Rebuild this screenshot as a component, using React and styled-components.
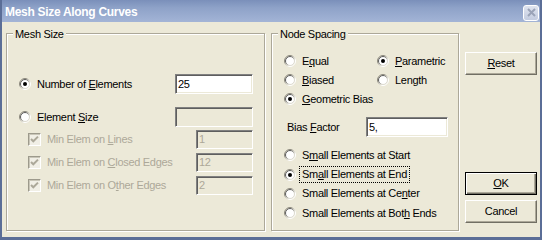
import React from "react";
import styled, { createGlobalStyle } from "styled-components";

const GlobalStyle = createGlobalStyle`
	html, body {
		margin: 0;
		padding: 0;
		background: #fff;
	}
`;

const Window = styled.div`
	width: 542px;
	height: 240px;
	box-sizing: border-box;
	display: flex;
	flex-direction: column;
	border: 0 solid #5b6e97;
	border-width: 0 2px 3px 2px;
	background: #ece9d8;
	font-family: "Liberation Sans", Arial, sans-serif;
	font-size: 11px;
	letter-spacing: -0.3px;
	line-height: 13px;
	color: #000;
`;

const TitleBar = styled.div`
	flex: none;
	height: 22px;
	display: flex;
	align-items: center;
	justify-content: space-between;
	padding: 0 0 0 3px;
	background: linear-gradient(to bottom, #7a8fba 0%, #8ea2c8 35%, #a3b4d6 100%);
`;

const Title = styled.span`
	padding-top: 2px;
	color: #fff;
	font-weight: 700;
	font-size: 12px;
	letter-spacing: -0.3px;
`;

const CloseButton = styled.div`
	width: 16px;
	height: 16px;
	margin: 3px 1px 0 0;
	box-sizing: border-box;
	border: 1px solid #fff;
	border-radius: 3px;
	background: linear-gradient(to bottom, #dfe4ef, #c3cce0);
	display: flex;
	align-items: center;
	justify-content: center;
`;

const Body = styled.div`
	flex: 1;
	display: flex;
	gap: 6px;
	padding: 11px 3px 6px 4px;
	min-height: 0;
`;

const GroupBox = styled.div`
	position: relative;
	box-sizing: border-box;
	width: ${(props) => props.$width}px;
	border: 1px solid #aca899;
	box-shadow: inset 1px 1px #fff, 1px 1px #fff;
	display: flex;
	flex-direction: column;
	padding: ${(props) => props.$pad};
`;

const Legend = styled.span`
	position: absolute;
	top: -6px;
	left: 6px;
	padding: 0 2px;
	background: #ece9d8;
`;

const Row = styled.div`
	display: flex;
	align-items: center;
	justify-content: space-between;
	height: ${(props) => props.$height}px;
	margin-top: ${(props) => props.$top || 0}px;
	padding-left: ${(props) => props.$indent || 0}px;
`;

const CheckList = styled.div`
	display: flex;
	flex-direction: column;
	gap: 4px;
	margin-top: 3px;
	padding-left: 9px;
`;

const Choice = styled.div`
	display: flex;
	align-items: center;
	gap: 6px;
	height: 16px;
	white-space: nowrap;
	color: ${(props) => (props.$disabled ? "#aca899" : "#000")};
`;

const RadioGrid = styled.div`
	display: grid;
	grid-template-columns: 93px auto;
	grid-auto-rows: 16px;
	row-gap: 3.2px;
`;

const RadioList = styled.div`
	display: flex;
	flex-direction: column;
	gap: 3.3px;
	margin-top: 10px;
`;

const Key = styled.span`
	text-decoration: underline;
`;

const FocusText = styled.span`
	border: 1px dotted #000;
	padding: 1px 2px;
	margin-left: -3px;
`;

const Edit = styled.div`
	box-sizing: border-box;
	width: ${(props) => props.$width}px;
	height: ${(props) => props.$height}px;
	border: 1px solid;
	border-color: #808080 #fff #fff #808080;
	box-shadow: inset 1px 1px #5e5e5e, inset -1px -1px #ece9d8;
	background: ${(props) => (props.$disabled ? "#ece9d8" : "#fff")};
	color: ${(props) => (props.$disabled ? "#aca899" : "#000")};
	padding-left: 2px;
	line-height: ${(props) => props.$height - 2}px;
`;

const CheckBox = styled.div`
	box-sizing: border-box;
	width: 13px;
	height: 13px;
	flex: none;
	border: 1px solid;
	border-color: #9d9a8c #fff #fff #9d9a8c;
	box-shadow: inset 1px 1px #c9c6b8;
	background: #f1efe6;
	display: flex;
	align-items: center;
	justify-content: center;
`;

const ButtonColumn = styled.div`
	width: 72px;
	flex: none;
	box-sizing: border-box;
	display: flex;
	flex-direction: column;
	padding: 19px 0 8px;
`;

const Button = styled.div`
	box-sizing: border-box;
	height: 23px;
	flex: none;
	display: flex;
	align-items: center;
	justify-content: center;
	background: #ece9d8;
	border: 1px solid;
	border-color: ${(props) => (props.$default ? "#000" : "#fff #716f64 #716f64 #fff")};
	box-shadow: ${(props) =>
		props.$default
			? "inset 1px 1px #fff, inset -1px -1px #716f64, inset -2px -2px #aca899"
			: "inset -1px -1px #aca899"};
	margin-top: ${(props) => props.$top};
`;

const Radio = ({ checked }) => (
	<svg width="12" height="12" viewBox="0 0 12 12" style={{ flex: "none" }}>
		<defs>
			<linearGradient id="rOuter" x1="0" y1="0" x2="1" y2="1">
				<stop offset="0.3" stopColor="#8a877b" />
				<stop offset="0.7" stopColor="#ffffff" />
			</linearGradient>
			<linearGradient id="rInner" x1="0" y1="0" x2="1" y2="1">
				<stop offset="0.3" stopColor="#5a5a5a" />
				<stop offset="0.7" stopColor="#dcdad0" />
			</linearGradient>
		</defs>
		<circle cx="6" cy="6" r="5.5" fill="none" stroke="url(#rOuter)" />
		<circle cx="6" cy="6" r="4.5" fill="#fff" stroke="url(#rInner)" />
		{checked && <circle cx="6" cy="6" r="2" fill="#000" />}
	</svg>
);

const Check = () => (
	<CheckBox>
		<svg width="9" height="9" viewBox="0 0 9 9">
			<polyline points="1,4 3.3,6.3 8,1.6" fill="none" stroke="#aca899" strokeWidth="2" />
		</svg>
	</CheckBox>
);

const App = () => (
	<>
		<GlobalStyle />
		<Window>
			<TitleBar>
				<Title>Mesh Size Along Curves</Title>
				<CloseButton>
					<svg width="9" height="9" viewBox="0 0 9 9">
						<path d="M1 1 L8 8 M8 1 L1 8" stroke="#9aa3b8" strokeWidth="2" />
					</svg>
				</CloseButton>
			</TitleBar>
			<Body>
				<GroupBox $width={259} $pad="40px 11px 0 12px">
					<Legend>Mesh Size</Legend>
					<Row $height={20}>
						<Choice>
							<Radio checked />
							<span>
								Number of <Key>E</Key>lements
							</span>
						</Choice>
						<Edit $width={78} $height={20}>25</Edit>
					</Row>
					<Row $height={20} $top={13}>
						<Choice>
							<Radio />
							<span>
								Element <Key>S</Key>ize
							</span>
						</Choice>
						<Edit $width={78} $height={20} $disabled />
					</Row>
					<CheckList>
						<Row $height={19}>
							<Choice $disabled>
								<Check />
								<span>
									Min Elem on <Key>L</Key>ines
								</span>
							</Choice>
							<Edit $width={57} $height={19} $disabled>1</Edit>
						</Row>
						<Row $height={19}>
							<Choice $disabled>
								<Check />
								<span>
									Min Elem on <Key>C</Key>losed Edges
								</span>
							</Choice>
							<Edit $width={57} $height={19} $disabled>12</Edit>
						</Row>
						<Row $height={19}>
							<Choice $disabled>
								<Check />
								<span>
									Min Elem on O<Key>t</Key>her Edges
								</span>
							</Choice>
							<Edit $width={57} $height={19} $disabled>2</Edit>
						</Row>
					</CheckList>
				</GroupBox>
				<GroupBox $width={188} $pad="19px 10px 0 12px">
					<Legend>Node Spacing</Legend>
					<RadioGrid>
						<Choice>
							<Radio />
							<span>
								E<Key>q</Key>ual
							</span>
						</Choice>
						<Choice>
							<Radio checked />
							<span>
								<Key>P</Key>arametric
							</span>
						</Choice>
						<Choice>
							<Radio />
							<span>
								<Key>B</Key>iased
							</span>
						</Choice>
						<Choice>
							<Radio />
							<span>Length</span>
						</Choice>
						<Choice>
							<Radio checked />
							<span>
								<Key>G</Key>eometric Bias
							</span>
						</Choice>
					</RadioGrid>
					<Row $height={20} $top={10} $indent={3}>
						<span>
							Bias <Key>F</Key>actor
						</span>
						<Edit $width={82} $height={20}>5,</Edit>
					</Row>
					<RadioList>
						<Choice>
							<Radio />
							<span>
								S<Key>m</Key>all Elements at Start
							</span>
						</Choice>
						<Choice>
							<Radio checked />
							<FocusText>
								Sm<Key>a</Key>ll Elements at End
							</FocusText>
						</Choice>
						<Choice>
							<Radio />
							<span>
								Small Elements at Ce<Key>n</Key>ter
							</span>
						</Choice>
						<Choice>
							<Radio />
							<span>
								Small Elements at Bot<Key>h</Key> Ends
							</span>
						</Choice>
					</RadioList>
				</GroupBox>
				<ButtonColumn>
					<Button>
						<span>
							<Key>R</Key>eset
						</span>
					</Button>
					<Button $default $top="auto">
						<span>
							<Key>O</Key>K
						</span>
					</Button>
					<Button $top="5px">Cancel</Button>
				</ButtonColumn>
			</Body>
		</Window>
	</>
);

export default App;
